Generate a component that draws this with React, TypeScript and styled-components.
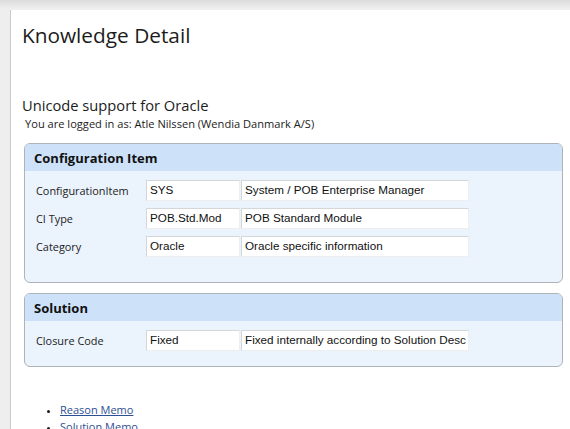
import React from "react";
import styled, { createGlobalStyle } from "styled-components";

const Global = createGlobalStyle`
  html, body { margin: 0; padding: 0; background: #fff; }
  body { font-family: "Open Sans", "Noto Sans", sans-serif; color: #1a1a1a; }
`;

const Shell = styled.div`
  display: flex;
  flex-direction: column;
  width: 570px;
  height: 429px;
  overflow: hidden;
`;

const TopBand = styled.div`
  height: 10px;
  flex: none;
  background: linear-gradient(#dcdcdc, #f1f1f1);
`;

const Body = styled.div`
  display: flex;
  flex: 1;
  min-height: 0;
`;

const SideBand = styled.div`
  width: 10px;
  flex: none;
  background: #eeeeee;
  border-right: 1px solid #c9c9c9;
`;

const Content = styled.main`
  flex: 1;
  padding: 12px 7px 0 11px;
  display: flex;
  flex-direction: column;

  & > * {
    flex-shrink: 0;
  }
`;

const Title = styled.h1`
  margin: 0;
  font-size: 20.8px;
  font-weight: 400;
  line-height: 26px;
  color: #1c1c1c;
`;

const Subject = styled.h2`
  margin: 48px 0 0;
  font-size: 14.7px;
  font-weight: 400;
  line-height: 19px;
  color: #1c1c1c;
`;

const LoggedIn = styled.div`
  margin: 2px 0 0 3px;
  font-size: 11.1px;
  line-height: 14px;
  color: #1c1c1c;
`;

const Panel = styled.section<{ $gap: number }>`
  margin: ${(p) => p.$gap}px 0 0 2px;
  width: 539px;
  box-sizing: border-box;
  border: 1px solid #aeb3b8;
  border-radius: 6px;
  background: #ebf3fd;
  overflow: hidden;
`;

const PanelHead = styled.div`
  height: 27px;
  background: #cde2f8;
  padding-left: 9px;
  display: flex;
  align-items: center;
  font-weight: 700;
  font-size: 13px;
  color: #111;
`;

const Rows = styled.div<{ $bottom: number }>`
  display: flex;
  flex-direction: column;
  gap: 7px;
  padding: 9px 0 ${(p) => p.$bottom}px 11px;
`;

const Row = styled.div`
  display: flex;
  align-items: center;
  height: 21px;
`;

const Label = styled.span`
  width: 110px;
  font-size: 10.9px;
  color: #222;
`;

const Field = styled.div<{ $w: number }>`
  width: ${(p) => p.$w}px;
  height: 21px;
  box-sizing: border-box;
  margin-right: 1px;
  background: #fff;
  border: 1px solid #d4d7da;
  border-bottom-color: #eceef0;
  border-right-color: #eceef0;
  padding: 0 0 2px 3px;
  display: flex;
  align-items: center;
  font-family: "Liberation Sans", Arial, sans-serif;
  font-size: 11.7px;
  color: #111;
  white-space: nowrap;
  overflow: hidden;
`;

const Links = styled.ul`
  margin: 34px 0 0;
  padding-left: 38px;
  font-size: 11px;
  line-height: 17px;
  li::marker { font-size: 9px; }
`;

const Link = styled.a`
  color: #2d4f94;
  text-decoration: underline;
`;

type Item = { label: string; code: string; text: string };

const ciRows: Item[] = [
  { label: "ConfigurationItem", code: "SYS", text: "System / POB Enterprise Manager" },
  { label: "CI Type", code: "POB.Std.Mod", text: "POB Standard Module" },
  { label: "Category", code: "Oracle", text: "Oracle specific information" },
];

const solutionRows: Item[] = [
  { label: "Closure Code", code: "Fixed", text: "Fixed internally according to Solution Desc" },
];

function FieldRows({ items, bottom }: { items: Item[]; bottom: number }) {
  return (
    <Rows $bottom={bottom}>
      {items.map((it) => (
        <Row key={it.label}>
          <Label>{it.label}</Label>
          <Field $w={94}>{it.code}</Field>
          <Field $w={228}>{it.text}</Field>
        </Row>
      ))}
    </Rows>
  );
}

export default function App() {
  return (
    <Shell>
      <Global />
      <TopBand />
      <Body>
        <SideBand />
        <Content>
          <Title>Knowledge Detail</Title>
          <Subject>Unicode support for Oracle</Subject>
          <LoggedIn>You are logged in as: Atle Nilssen (Wendia Danmark A/S)</LoggedIn>
          <Panel $gap={12}>
            <PanelHead>Configuration Item</PanelHead>
            <FieldRows items={ciRows} bottom={25} />
          </Panel>
          <Panel $gap={10}>
            <PanelHead>Solution</PanelHead>
            <FieldRows items={solutionRows} bottom={15} />
          </Panel>
          <Links>
            <li><Link href="#">Reason Memo</Link></li>
            <li><Link href="#">Solution Memo</Link></li>
          </Links>
        </Content>
      </Body>
    </Shell>
  );
}
